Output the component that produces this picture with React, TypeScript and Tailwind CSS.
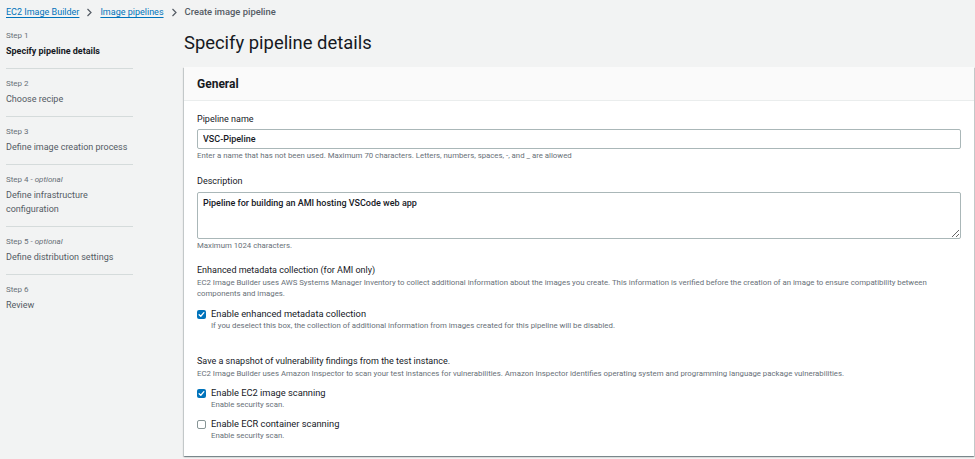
import React from "react";

const font = { fontFamily: "Roboto, 'Open Sans', Arial, sans-serif" };

function Check({ checked }: { checked: boolean }) {
  return checked ? (
    <span className="flex h-[9px] w-[9px] shrink-0 items-center justify-center rounded-[2px] bg-[#0073bb]">
      <svg width="7" height="7" viewBox="0 0 8 8" fill="none">
        <path d="M1.3 4.2 L3.2 6 L6.7 1.9" stroke="white" strokeWidth="1.5" strokeLinecap="round" strokeLinejoin="round" />
      </svg>
    </span>
  ) : (
    <span className="block h-[9px] w-[9px] shrink-0 rounded-[2px] border border-[#879596] bg-white" />
  );
}

function Step({ label, optional, title, active, first }: { label: string; optional?: boolean; title: string[]; active?: boolean; first?: boolean }) {
  return (
    <div className={first ? "pb-[10px]" : "border-t border-[#d5dbdb] pt-[9px] pb-[10px]"}>
      <div className="text-[8px] leading-[12px] text-[#687078]">
        {label}
        {optional && <span className="italic"> - optional</span>}
      </div>
      <div className={"mt-[2px] text-[9px] leading-[14px] " + (active ? "font-bold text-[#16191f]" : "text-[#545b64]")}>
        {title.map((t, i) => (
          <div key={i}>{t}</div>
        ))}
      </div>
    </div>
  );
}

function CheckRow({ checked, label, sub }: { checked: boolean; label: string; sub: string }) {
  return (
    <div>
      <div className="flex h-[14px] items-center gap-[5px]">
        <Check checked={checked} />
        <span className="text-[9.3px] leading-[14px] text-[#16191f]">{label}</span>
      </div>
      <div className="ml-[14px] text-[7.8px] leading-[10px] text-[#687078]">{sub}</div>
    </div>
  );
}

export default function App() {
  return (
    <div style={font} className="h-[459px] w-[975px] overflow-hidden bg-[#f2f3f3] text-[#16191f]">
      <div className="flex h-[14px] items-center pl-[6px] pt-[5px] box-content text-[9px] leading-[14px]">
        <span className="text-[#0073bb] underline underline-offset-2">EC2 Image Builder</span>
        <svg className="mx-[7px]" width="7" height="9" viewBox="0 0 7 9" fill="none">
          <path d="M1.5 1 L5 4.5 L1.5 8" stroke="#545b64" strokeWidth="1.2" />
        </svg>
        <span className="text-[#0073bb] underline underline-offset-2">Image pipelines</span>
        <svg className="mx-[7px]" width="7" height="9" viewBox="0 0 7 9" fill="none">
          <path d="M1.5 1 L5 4.5 L1.5 8" stroke="#545b64" strokeWidth="1.2" />
        </svg>
        <span className="text-[9.4px] font-medium text-[#545b64]">Create image pipeline</span>
      </div>
      <div className="mt-[11px] flex">
        <div className="ml-[6px] w-[127px] shrink-0">
          <Step first label="Step 1" title={["Specify pipeline details"]} active />
          <Step label="Step 2" title={["Choose recipe"]} />
          <Step label="Step 3" title={["Define image creation process"]} />
          <Step label="Step 4" optional title={["Define infrastructure", "configuration"]} />
          <Step label="Step 5" optional title={["Define distribution settings"]} />
          <Step label="Step 6" title={["Review"]} />
        </div>
        <div className="ml-[51px] mr-[2px] flex-1">
          <h1 className="mt-[1px] text-[18.4px] leading-[24px] font-normal text-[#16191f]">Specify pipeline details</h1>
          <div className="mt-[12px] bg-white shadow-[0_1px_1px_0_rgba(0,28,36,0.3),1px_1px_1px_0_rgba(0,28,36,0.15),-1px_1px_1px_0_rgba(0,28,36,0.15)]">
            <div className="flex h-[34px] items-center border-b border-[#eaeded] bg-[#fafafa] px-[13px]">
              <span className="text-[12px] font-bold text-[#16191f]">General</span>
            </div>
            <div className="px-[13px] pt-[11px] pb-[15px]">
              <div className="text-[9px] leading-[14px]">Pipeline name</div>
              <input
                readOnly
                value="VSC-Pipeline"
                className="mt-[3px] block h-[20px] w-[764px] rounded-[2px] border border-[#aab7b8] bg-white px-[5px] text-[9px] font-medium text-[#16191f] outline-none"
              />
              <div className="mt-[2px] text-[7.8px] leading-[10px] text-[#687078]">
                Enter a name that has not been used. Maximum 70 characters. Letters, numbers, spaces, -, and _ are allowed
              </div>
              <div className="mt-[13px] text-[9px] leading-[14px]">Description</div>
              <textarea
                readOnly
                value="Pipeline for building an AMI hosting VSCode web app"
                className="mt-[4px] block h-[47px] w-[764px] rounded-[2px] border border-[#aab7b8] bg-white px-[5px] py-[3px] text-[9px] leading-[14px] font-medium text-[#16191f] outline-none"
              />
              <div className="mt-[2px] text-[7.8px] leading-[10px] text-[#687078]">Maximum 1024 characters.</div>
              <div className="mt-[12px] text-[9px] leading-[14px]">Enhanced metadata collection (for AMI only)</div>
              <div className="text-[7.8px] leading-[11px] text-[#687078]">
                EC2 Image Builder uses AWS Systems Manager Inventory to collect additional information about the images you create. This information is verified before the creation of an image to ensure compatibility between
                <br />
                components and images.
              </div>
              <div className="mt-[8px]">
                <CheckRow
                  checked
                  label="Enable enhanced metadata collection"
                  sub="If you deselect this box, the collection of additional information from images created for this pipeline will be disabled."
                />
              </div>
              <div className="mt-[23px] text-[9px] leading-[14px]">Save a snapshot of vulnerability findings from the test instance.</div>
              <div className="text-[7.8px] leading-[11px] text-[#687078]">
                EC2 Image Builder uses Amazon Inspector to scan your test instances for vulnerabilities. Amazon Inspector identifies operating system and programming language package vulnerabilities.
              </div>
              <div className="mt-[7px]">
                <CheckRow checked label="Enable EC2 image scanning" sub="Enable security scan." />
              </div>
              <div className="mt-[7px]">
                <CheckRow checked={false} label="Enable ECR container scanning" sub="Enable security scan." />
              </div>
            </div>
          </div>
        </div>
      </div>
    </div>
  );
}
